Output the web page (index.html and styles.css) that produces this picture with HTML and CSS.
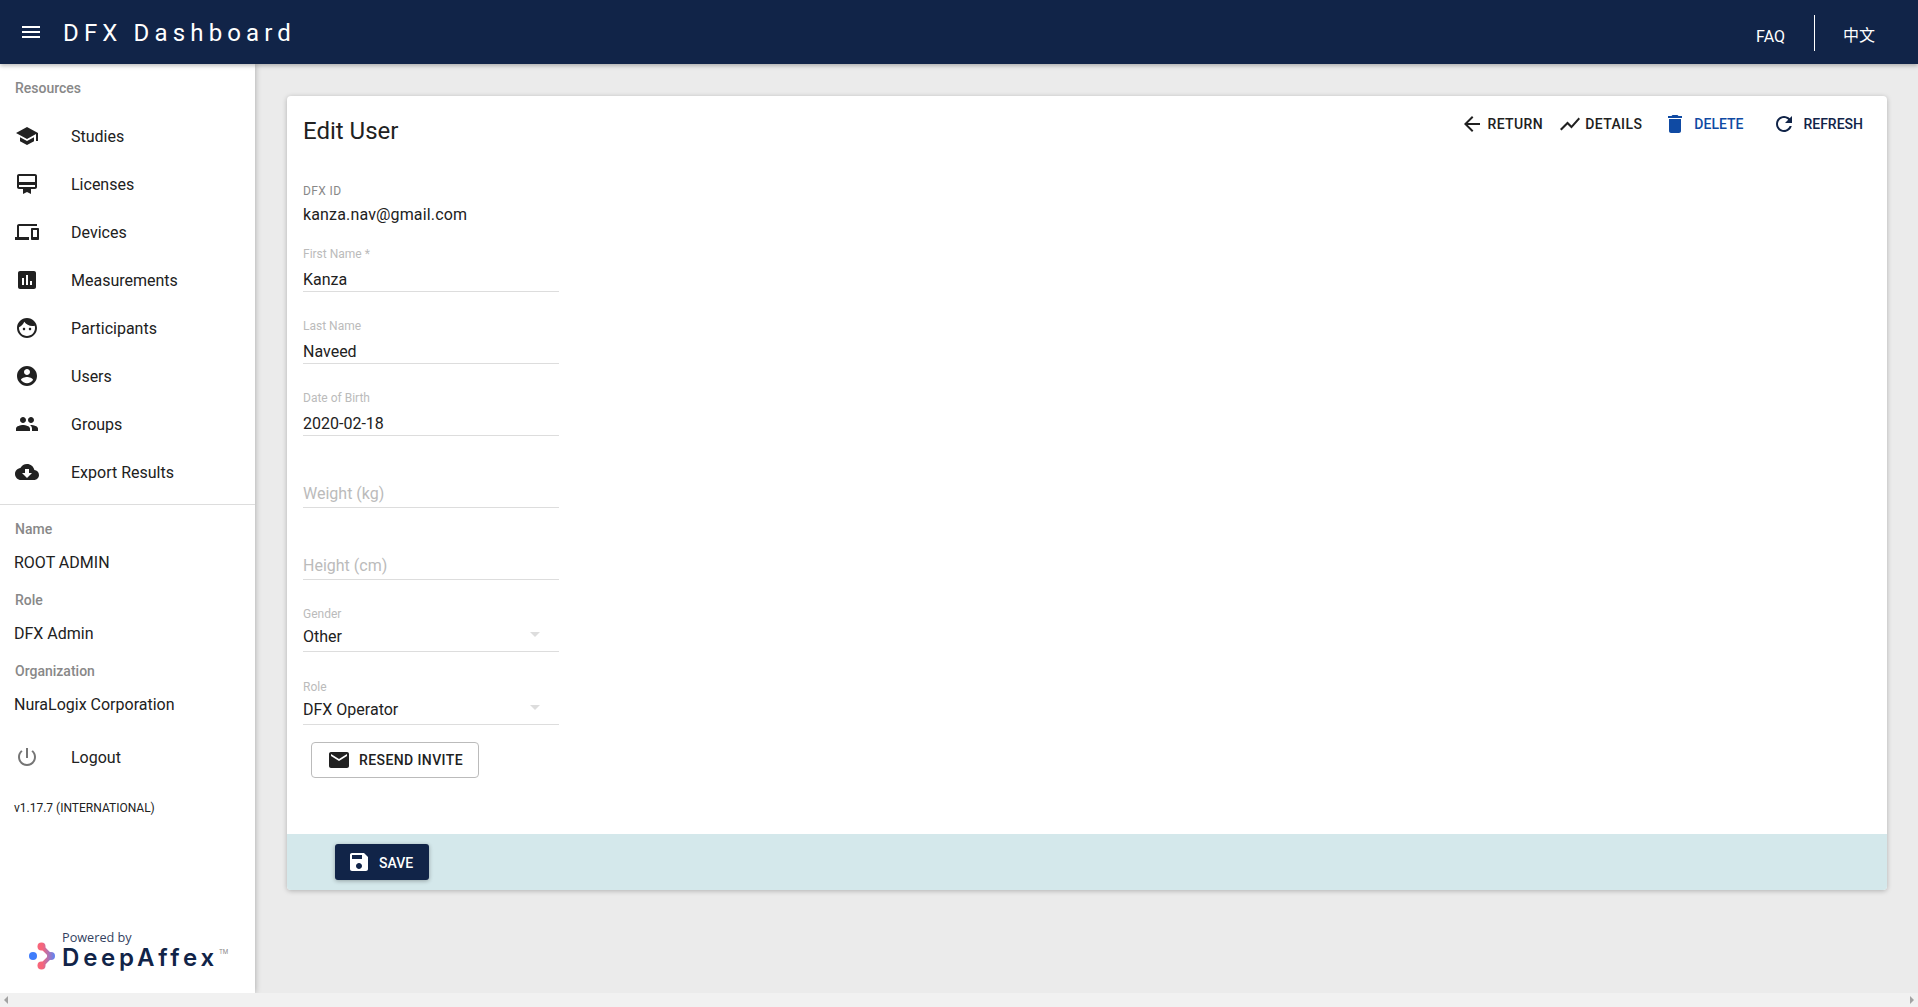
FILE: index.html
```html
<!DOCTYPE html>
<html>
<head>
    <title>DFX Dashboard</title>
    <link rel="stylesheet" href="styles.css">
</head>
<body>
    <header class="appbar">
        <svg class="menu-icon" viewBox="0 0 24 24"><path d="M3 18h18v-2H3v2zm0-5h18v-2H3v2zm0-7v2h18V6H3z"/></svg>
        <div class="app-title">DFX Dashboard</div>
        <a class="faq">FAQ</a>
        <div class="appbar-sep"></div>
        <a class="lang">中文</a>
    </header>

    <div class="layout">
        <aside class="sidebar">
            <div class="side-caption">Resources</div>
            <nav class="side-nav">
                <a class="nav-item"><svg viewBox="0 0 24 24"><path d="M5 13.18v4L12 21l7-3.82v-4L12 17l-7-3.82zM12 3L1 9l11 6 9-4.91V17h2V9L12 3z"/></svg>Studies</a>
                <a class="nav-item"><svg viewBox="0 0 24 24"><path d="M20 2H4c-1.11 0-2 .89-2 2v11c0 1.11.89 2 2 2h4v5l4-2 4 2v-5h4c1.11 0 2-.89 2-2V4c0-1.11-.89-2-2-2zm0 13H4v-2h16v2zm0-5H4V4h16v6z"/></svg>Licenses</a>
                <a class="nav-item"><svg viewBox="0 0 24 24"><path d="M4 6h18V4H4c-1.1 0-2 .9-2 2v11H0v3h14v-3H4V6zm19 2h-6c-.55 0-1 .45-1 1v10c0 .55.45 1 1 1h6c.55 0 1-.45 1-1V9c0-.55-.45-1-1-1zm-1 9h-4v-7h4v7z"/></svg>Devices</a>
                <a class="nav-item"><svg viewBox="0 0 24 24"><path d="M19 3H5c-1.1 0-2 .9-2 2v14c0 1.1.9 2 2 2h14c1.1 0 2-.9 2-2V5c0-1.1-.9-2-2-2zM9 17H7v-7h2v7zm4 0h-2V7h2v10zm4 0h-2v-4h2v4z"/></svg>Measurements</a>
                <a class="nav-item"><svg viewBox="0 0 24 24"><path d="M9 11.75c-.69 0-1.25.56-1.25 1.25s.56 1.25 1.25 1.25 1.25-.56 1.25-1.25-.56-1.25-1.25-1.25zm6 0c-.69 0-1.25.56-1.25 1.25s.56 1.25 1.25 1.25 1.25-.56 1.25-1.25-.56-1.25-1.25-1.25zM12 2C6.48 2 2 6.48 2 12s4.48 10 10 10 10-4.48 10-10S17.52 2 12 2zm0 18c-4.41 0-8-3.59-8-8 0-.29.02-.58.05-.86 2.36-1.05 4.23-2.98 5.21-5.37C11.07 8.33 14.05 10 17.42 10c.78 0 1.53-.09 2.25-.26.21.71.33 1.47.33 2.26 0 4.41-3.59 8-8 8z"/></svg>Participants</a>
                <a class="nav-item"><svg viewBox="0 0 24 24"><path d="M12 2C6.48 2 2 6.48 2 12s4.48 10 10 10 10-4.48 10-10S17.52 2 12 2zm0 3c1.66 0 3 1.34 3 3s-1.34 3-3 3-3-1.34-3-3 1.34-3 3-3zm0 14.2c-2.5 0-4.71-1.28-6-3.22.03-1.99 4-3.08 6-3.08 1.99 0 5.97 1.09 6 3.08-1.29 1.94-3.5 3.22-6 3.22z"/></svg>Users</a>
                <a class="nav-item"><svg viewBox="0 0 24 24"><path d="M16 11c1.66 0 2.99-1.34 2.99-3S17.66 5 16 5c-1.66 0-3 1.34-3 3s1.34 3 3 3zm-8 0c1.66 0 2.99-1.34 2.99-3S9.66 5 8 5C6.34 5 5 6.34 5 8s1.34 3 3 3zm0 2c-2.33 0-7 1.17-7 3.5V19h14v-2.5c0-2.33-4.67-3.5-7-3.5zm8 0c-.29 0-.62.02-.97.05 1.16.84 1.97 1.97 1.97 3.45V19h6v-2.5c0-2.33-4.67-3.5-7-3.5z"/></svg>Groups</a>
                <a class="nav-item"><svg viewBox="0 0 24 24"><path d="M19.35 10.04C18.67 6.59 15.64 4 12 4 9.11 4 6.6 5.64 5.35 8.04 2.34 8.36 0 10.91 0 14c0 3.31 2.69 6 6 6h13c2.76 0 5-2.24 5-5 0-2.64-2.05-4.78-4.65-4.96zM17 13l-5 5-5-5h3V9h4v4h3z"/></svg>Export Results</a>
            </nav>
            <div class="side-divider"></div>
            <div class="side-info">
                <div class="info-label">Name</div>
                <div class="info-value">ROOT ADMIN</div>
                <div class="info-label">Role</div>
                <div class="info-value">DFX Admin</div>
                <div class="info-label">Organization</div>
                <div class="info-value">NuraLogix Corporation</div>
            </div>
            <a class="nav-item nav-logout"><svg viewBox="0 0 24 24"><path d="M13 3h-2v10h2V3zm4.83 2.17l-1.42 1.42C17.99 7.86 19 9.81 19 12c0 3.87-3.13 7-7 7s-7-3.13-7-7c0-2.19 1.01-4.14 2.58-5.42L6.17 5.17C4.23 6.82 3 9.26 3 12c0 4.97 4.03 9 9 9s9-4.03 9-9c0-2.74-1.23-5.18-3.17-6.83z"/></svg>Logout</a>
            <div class="version">v1.17.7 (INTERNATIONAL)</div>
            <div class="powered">
                <svg class="logo-mark" viewBox="0 0 28 28">
                    <defs>
                        <linearGradient id="mark" gradientUnits="userSpaceOnUse" x1="9" y1="0" x2="27" y2="0">
                            <stop offset="0.3" stop-color="#f7657a"/>
                            <stop offset="1" stop-color="#5d84f5"/>
                        </linearGradient>
                    </defs>
                    <circle cx="5" cy="14" r="4" fill="#3f7dfb"/>
                    <circle cx="13.5" cy="4.5" r="4" fill="url(#mark)"/>
                    <circle cx="13.5" cy="23.5" r="4" fill="url(#mark)"/>
                    <circle cx="23" cy="14" r="4" fill="url(#mark)"/>
                    <path d="M13.5 4.5 L23 14 L13.5 23.5" fill="none" stroke="url(#mark)" stroke-width="4"/>
                </svg>
                <div class="logo-text">
                    <div class="logo-by">Powered by</div>
                    <div class="logo-name">DeepAffex<span class="logo-tm">TM</span></div>
                </div>
            </div>
        </aside>

        <main class="content">
            <section class="card">
                <div class="card-body">
                    <div class="card-head">
                        <h1 class="card-title">Edit User</h1>
                        <div class="toolbar">
                            <a class="tool tool-return"><svg viewBox="0 0 24 24"><path d="M20 11H7.83l5.59-5.59L12 4l-8 8 8 8 1.41-1.41L7.83 13H20v-2z"/></svg>RETURN</a>
                            <a class="tool tool-details"><svg viewBox="0 0 24 24"><path d="M3.5 18.49l6-6.01 4 4L22 6.92l-1.41-1.41-7.09 7.97-4-4L2 16.99z"/></svg>DETAILS</a>
                            <a class="tool tool-delete"><svg viewBox="0 0 24 24"><path d="M6 19c0 1.1.9 2 2 2h8c1.1 0 2-.9 2-2V7H6v12zM19 4h-3.5l-1-1h-5l-1 1H5v2h14V4z"/></svg>DELETE</a>
                            <a class="tool tool-refresh"><svg viewBox="0 0 24 24"><path d="M17.65 6.35C16.2 4.9 14.21 4 12 4c-4.42 0-7.99 3.58-7.99 8s3.57 8 7.99 8c3.73 0 6.84-2.55 7.73-6h-2.08c-.82 2.33-3.04 4-5.65 4-3.31 0-6-2.69-6-6s2.69-6 6-6c1.66 0 3.14.69 4.22 1.78L13 11h7V4l-2.35 2.35z"/></svg>REFRESH</a>
                        </div>
                    </div>

                    <div class="static-field">
                        <div class="static-label">DFX ID</div>
                        <div class="static-value">kanza.nav@gmail.com</div>
                    </div>

                    <div class="field">
                        <div class="field-label">First Name *</div>
                        <div class="field-value">Kanza</div>
                    </div>
                    <div class="field">
                        <div class="field-label">Last Name</div>
                        <div class="field-value">Naveed</div>
                    </div>
                    <div class="field">
                        <div class="field-label">Date of Birth</div>
                        <div class="field-value">2020-02-18</div>
                    </div>
                    <div class="field field-empty">
                        <div class="field-value">Weight (kg)</div>
                    </div>
                    <div class="field field-empty">
                        <div class="field-value">Height (cm)</div>
                    </div>
                    <div class="field field-select">
                        <div class="field-label">Gender</div>
                        <div class="field-value">Other</div>
                    </div>
                    <div class="field field-select field-role">
                        <div class="field-label">Role</div>
                        <div class="field-value">DFX Operator</div>
                    </div>

                    <button class="btn-outline"><svg viewBox="0 0 24 24"><path d="M20 4H4c-1.1 0-1.99.9-1.99 2L2 18c0 1.1.9 2 2 2h16c1.1 0 2-.9 2-2V6c0-1.1-.9-2-2-2zm0 4l-8 5-8-5V6l8 5 8-5v2z"/></svg>RESEND INVITE</button>
                </div>
                <div class="card-foot">
                    <button class="btn-save"><svg viewBox="0 0 24 24"><path d="M17 3H5c-1.11 0-2 .9-2 2v14c0 1.1.89 2 2 2h14c1.1 0 2-.9 2-2V7l-4-4zm-5 16c-1.66 0-3-1.34-3-3s1.34-3 3-3 3 1.34 3 3-1.34 3-3 3zm3-10H5V5h10v4z"/></svg><span class="save-text">SAVE</span></button>
                </div>
            </section>
        </main>
    </div>

    <div class="hscroll">
        <span class="arrow-left"></span>
        <span class="arrow-right"></span>
    </div>
</body>
</html>
```

FILE: styles.css
```css
* { box-sizing: border-box; }
html, body { height: 100%; }
body { margin: 0; display: flex; flex-direction: column; overflow: hidden; font-family: Roboto, "Noto Sans CJK SC", sans-serif; font-size: 16px; color: #212121; background: #ebebeb; }
svg { fill: currentColor; flex: none; }

.appbar { height: 64px; flex: none; display: flex; align-items: center; background: #112448; color: #fff; position: relative; z-index: 3; box-shadow: 0 2px 4px rgba(0,0,0,.25); }
.menu-icon { width: 24px; height: 24px; margin-left: 19px; }
.app-title { margin: 2px 0 0 20px; font-size: 24px; letter-spacing: 5.15px; line-height: 32px; }
.faq { margin-left: auto; margin-top: 8px; }
.appbar-sep { width: 1px; height: 36px; background: #fff; margin: 1px 0 0 29px; }
.lang { margin: 4px 43px 0 28px; font-family: "Noto Sans CJK SC", sans-serif; }

.layout { flex: 1; display: flex; min-height: 0; }

.sidebar { width: 255px; flex: none; display: flex; flex-direction: column; background: #fff; position: relative; z-index: 2; box-shadow: 0 0 6px rgba(0,0,0,.3); }
.side-caption { height: 48px; padding: 14px 0 0 15px; font-size: 14px; line-height: 20px; font-weight: 500; color: #888; }
.nav-item { height: 48px; display: flex; align-items: center; padding-left: 15px; }
.nav-item svg { width: 24px; height: 24px; margin-right: 32px; }
.side-divider { height: 1px; background: #ddd; margin-top: 8px; }
.side-info { padding: 14px 0 0 14px; }
.info-label { font-size: 14px; line-height: 20px; font-weight: 500; color: #888; padding-left: 1px; }
.info-value { line-height: 24px; margin: 12px 0 15px; }
.nav-logout { margin-top: 1px; }
.nav-logout svg { color: #757575; }
.version { font-size: 12px; line-height: 16px; padding-left: 14px; margin-top: 19px; }

.powered { margin-top: auto; margin-bottom: 23px; padding-left: 28px; display: flex; align-items: flex-end; }
.logo-mark { width: 28px; height: 28px; }
.logo-text { margin-left: 6px; color: #112448; }
.logo-by { font-family: "Open Sans", sans-serif; font-size: 12.7px; line-height: 16px; margin-bottom: 1px; color: #333f5f; }
.logo-name { font-family: Inter, sans-serif; font-size: 24px; line-height: 24px; font-weight: 600; letter-spacing: 3.8px; position: relative; }
.logo-tm { position: absolute; top: 2px; left: 157px; font-size: 6px; line-height: 8px; font-weight: 400; letter-spacing: 0; color: #888; }

.content { flex: 1; min-width: 0; padding: 32px 31px 0 32px; }
.card { background: #fff; border-radius: 4px; box-shadow: 0 1px 5px rgba(0,0,0,.25); overflow: hidden; }
.card-body { padding: 19px 16px 56px; }
.card-head { display: flex; justify-content: space-between; margin-bottom: 36px; }
.card-title { margin: 0; font-size: 24px; line-height: 32px; font-weight: 400; }

.toolbar { display: flex; margin: -9px 8px 0 0; }
.tool { height: 36px; display: flex; align-items: center; font-size: 14px; font-weight: 500; }
.tool svg { width: 24px; height: 24px; }
.tool-return { letter-spacing: .4px; }
.tool-return svg { margin-right: 3px; }
.tool-details { margin-left: 15px; letter-spacing: .4px; }
.tool-details svg { margin-right: 3px; }
.tool-delete { margin-left: 21px; color: #0f4aa3; }
.tool-delete svg { margin-right: 7px; }
.tool-refresh { margin-left: 29px; color: #112448; }
.tool-refresh svg { margin-right: 7px; }

.static-field { margin-bottom: 17px; }
.static-label { font-size: 12px; line-height: 16px; color: #888; letter-spacing: .4px; }
.static-value { line-height: 24px; margin-top: 4px; letter-spacing: .15px; }

.field { width: 256px; height: 48px; margin-top: 24px; padding-top: 2px; border-bottom: 1px solid #ddd; position: relative; }
.static-field + .field { margin-top: 0; }
.field-label { font-size: 12px; line-height: 16px; color: #bbb; }
.field-value { line-height: 24px; margin-top: 6px; }
.field-empty { padding-top: 22px; }
.field-empty .field-value { color: #bbb; margin-top: 0; }
.field-select .field-value { margin-top: 3px; }
.field-select::after { content: ""; position: absolute; right: 19px; top: 28px; border: 5px solid transparent; border-top-color: #ddd; border-bottom: 0; }
.field-role { height: 49px; padding-top: 3px; }
.field-role::after { top: 29px; }

.btn-outline { display: flex; align-items: center; width: 168px; height: 36px; margin: 17px 0 0 8px; padding: 0 0 0 15px; background: #fff; border: 1px solid #bbb; border-radius: 4px; font: 500 14px Roboto, sans-serif; letter-spacing: .4px; color: #212121; }
.btn-outline svg { width: 24px; height: 24px; margin-right: 8px; }

.card-foot { height: 56px; padding: 10px 0 0 48px; background: #d4e8eb; }
.btn-save { display: flex; align-items: center; width: 94px; height: 36px; padding: 0 0 0 12px; background: #112448; border: 0; border-radius: 3px; box-shadow: 0 1px 4px rgba(0,0,0,.3); font: 500 14px Roboto, sans-serif; color: #fff; }
.btn-save svg { width: 24px; height: 24px; margin-right: 8px; }
.save-text { margin-top: 1px; }

.hscroll { height: 14px; flex: none; background: #f1f1f1; display: flex; align-items: center; justify-content: space-between; padding: 0 4px; position: relative; z-index: 2; }
.arrow-left { border: 4px solid transparent; border-left: 0; border-right-color: #a3a3a3; }
.arrow-right { border: 4px solid transparent; border-right: 0; border-left-color: #a3a3a3; }
```
